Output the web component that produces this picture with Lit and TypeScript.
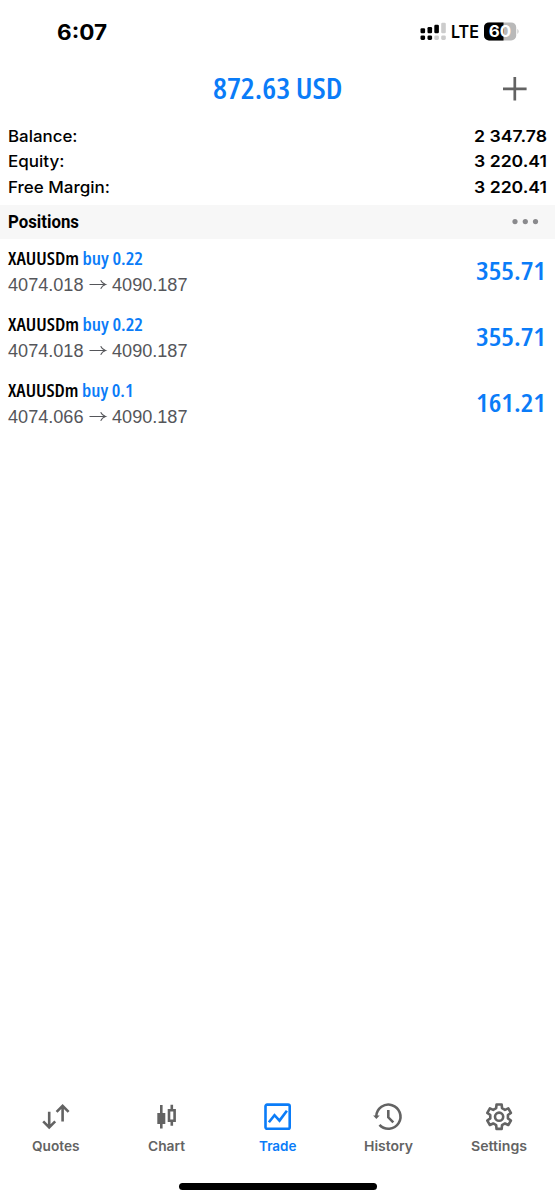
import { LitElement, html, svg, css } from "lit";
import { customElement } from "lit/decorators.js";

// A single line of text drawn to an exact width; `base` is the baseline inside the box.
const line = (cls: string, text: unknown, width: number, height: number, base: number) => html`
  <svg class="line" width=${width} height=${height}>
    <text class=${cls} x="0" y=${base} textLength=${width} lengthAdjust="spacingAndGlyphs">${text}</text>
  </svg>`;

const gearPath = (cx: number, cy: number) => {
  const pts: string[] = [];
  for (let i = 0; i < 6; i++) {
    for (const [off, r] of [[-19, 9], [-12, 12.4], [12, 12.4], [19, 9]]) {
      const a = ((i * 60 - 90 + off) * Math.PI) / 180;
      pts.push(`${(cx + r * Math.cos(a)).toFixed(2)} ${(cy + r * Math.sin(a)).toFixed(2)}`);
    }
  }
  return `M${pts.join("L")}Z`;
};

const summary = [
  { label: "Balance:", lw: 69.5, value: "2 347.78" },
  { label: "Equity:", lw: 56.5, value: "3 220.41" },
  { label: "Free Margin:", lw: 102, value: "3 220.41" },
];

const positions = [
  { side: "buy 0.22", w: 135, open: "4074.018", now: "4090.187", profit: "355.71" },
  { side: "buy 0.22", w: 135, open: "4074.018", now: "4090.187", profit: "355.71" },
  { side: "buy 0.1", w: 125.5, open: "4074.066", now: "4090.187", profit: "161.21" },
];

const tabs = [
  { name: "Quotes", w: 47.5, icon: svg`<path d="M9.2 10.8V26M3.2 20.3l6 6 6-6M22.6 20.5V5M16.6 10.8l6-6 6 6"/>` },
  { name: "Chart", w: 37, icon: svg`<path class="solid" d="M6.3 12h8v11h-8z"/><path d="M10.3 4v23.5M20.8 3.7V9M20.8 20v4.7M18 9.3h5.6v10.5h-5.6z"/>` },
  { name: "Trade", w: 37.5, icon: svg`<rect x="3.5" y="3.6" width="24.2" height="24.2" rx="1.6"/><path d="M6.9 21.3L12.5 14.2 17.5 19.6 24.9 9.7"/>` },
  { name: "History", w: 49, icon: svg`<path d="M3.3 15.2A12.1 12.1 0 1 1 6.5 23.9M15.3 9v7.3l5 5"/><path class="solid" d="M.1 14.4h6.6l-3.3 3.6z"/>` },
  { name: "Settings", w: 56, icon: svg`<path stroke-linejoin="round" d=${gearPath(15.1, 15.7)}/><circle cx="15.1" cy="15.7" r="4.1"/>` },
];

@customElement("app-root")
export class AppRoot extends LitElement {
  static styles = css`
    :host { display: flex; flex-direction: column; width: 555px; height: 1200px; background: #fff; overflow: hidden; }
    svg { display: block; flex: none; overflow: visible; }
    .status { display: flex; height: 60px; padding: 0 36px 0 56.5px; justify-content: space-between; }
    .radio { display: flex; }
    .time { font: 700 21.5px Inter, sans-serif; }
    .lte { font: 600 17.3px Inter, sans-serif; }
    .pct { font: 700 16px Inter, sans-serif; fill: #fff; }
    .head { display: grid; grid-template-columns: 1fr auto 1fr; height: 63px; padding: 0 28px 0 28px; }
    .head .plus { justify-self: end; }
    .total { font: 600 28px "Open Sans", sans-serif; font-stretch: 75%; fill: #0a7cf8; }
    .summary { height: 81.5px; }
    .sum { display: flex; justify-content: space-between; height: 26px; padding: 0 8px 0 8px; }
    .sum:first-child { height: 25px; }
    .lab { font: 500 16.5px Inter, sans-serif; }
    .val { font: 600 16.5px Inter, sans-serif; }
    .section { display: flex; justify-content: space-between; height: 34px; padding: 0 16px 0 8px; background: #f7f7f7; }
    .sec { font: 700 19px Roboto, sans-serif; }
    .list { flex: 1; }
    .pos { display: flex; justify-content: space-between; height: 66px; padding: 0 9px 0 8px; }
    .first { height: 33px; }
    .second { display: flex; gap: 4px; height: 33px; }
    .sym { font: 600 18.3px "Open Sans", sans-serif; font-stretch: 75%; }
    .side { fill: #0a7cf8; }
    .price { font: 400 18px "Liberation Sans", sans-serif; fill: #55565a; }
    .profit { font: 600 25.3px "Open Sans", sans-serif; font-stretch: 75%; fill: #0a7cf8; }
    .tabs { display: grid; grid-template-columns: repeat(5, 1fr); height: 82px; }
    .tab { display: flex; flex-direction: column; align-items: center; }
    .tab .line { margin-right: 0.5px; }
    .icon { fill: none; stroke: #636363; stroke-width: 2.6; }
    .solid { fill: #636363; stroke: none; }
    .name { font: 600 13.3px Inter, sans-serif; fill: #636363; }
    .active .icon { stroke: #0a7cf8; }
    .active .name { fill: #0a7cf8; }
    .home { flex: none; align-self: center; width: 198px; height: 6.4px; margin-bottom: 10.4px; border-radius: 4px; background: #000; }
  `;

  render() {
    return html`
      <div class="status">
        ${line("time", "6:07", 50, 60, 39.6)}
        <div class="radio">
          <svg width="31" height="60">
            <rect x="0.5" y="28.2" width="4.6" height="5" rx="1.2"/><rect x="7.5" y="27" width="4.6" height="6.2" rx="1.2"/>
            <rect x="14.3" y="24.8" width="4.6" height="8.4" rx="1.2"/><rect x="21.2" y="22.8" width="4.6" height="10.4" rx="1.2" fill="#ccc"/>
            <rect x="0.5" y="35.4" width="4.6" height="4.6" rx="1.4"/><rect x="7.5" y="35.4" width="4.6" height="4.6" rx="1.4"/>
            <rect x="14.3" y="35.4" width="4.6" height="4.6" rx="1.4" fill="#ccc"/><rect x="21.2" y="35.4" width="4.6" height="4.6" rx="1.4" fill="#ccc"/>
          </svg>
          ${line("lte", "LTE", 28, 60, 38.4)}
          <svg width="40" height="60">
            <rect x="5" y="22.4" width="32.2" height="18" rx="5" fill="#b9b9b9"/>
            <path d="M24.5 22.4V40.4H10A5 5 0 0 1 5 35.4V27.4A5 5 0 0 1 10 22.4Z"/>
            <path d="M38.5 28.7q2 2.7 0 5.4z" fill="#b9b9b9"/>
            <text class="pct" x="9.8" y="37.4" textLength="22.4" lengthAdjust="spacingAndGlyphs">60</text>
          </svg>
        </div>
      </div>
      <div class="head">
        <span></span>
        ${line("total", "872.63 USD", 129.5, 63, 38.8)}
        <svg class="plus" width="24" height="63"><path d="M0 28.8H23.6M11.8 17V40.4" stroke="#636363" stroke-width="2.7"/></svg>
      </div>
      <div class="summary">
        ${summary.map((s) => html`<div class="sum">${line("lab", s.label, s.lw, 25, 18.6)}${line("val", s.value, 73, 25, 18.6)}</div>`)}
      </div>
      <div class="section">
        ${line("sec", "Positions", 71, 34, 23.4)}
        <svg width="30" height="34" fill="#8a8a8d"><circle cx="6" cy="16.6" r="2.6"/><circle cx="16.3" cy="16.6" r="2.6"/><circle cx="26.5" cy="16.6" r="2.6"/></svg>
      </div>
      <div class="list">
        ${positions.map((p) => html`
          <div class="pos">
            <div>
              <div class="first">${line("sym", svg`XAUUSDm <tspan class="side">${p.side}</tspan>`, p.w, 33, 26.2)}</div>
              <div class="second">
                ${line("price", p.open, 75.5, 33, 19.2)}
                <svg width="20" height="33" fill="none" stroke="#55565a" stroke-width="1.1"><path d="M1.5 12.5H17.2M12.7 8.3Q14.1 11.5 17.5 12.5Q14.1 13.5 12.7 16.7"/></svg>
                ${line("price", p.now, 75.5, 33, 19.2)}
              </div>
            </div>
            ${line("profit", p.profit, 70, 66, 41.2)}
          </div>`)}
      </div>
      <div class="tabs">
        ${tabs.map((t) => html`
          <div class="tab ${t.name === "Trade" ? "active" : ""}">
            <svg class="icon" width="32" height="32">${t.icon}</svg>
            ${line("name", t.name, t.w, 24, 17.8)}
          </div>`)}
      </div>
      <div class="home"></div>
    `;
  }
}
